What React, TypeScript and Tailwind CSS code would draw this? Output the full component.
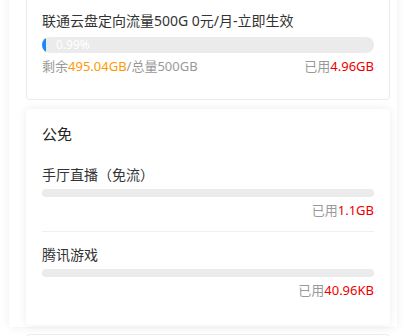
const font = { fontFamily: '"Noto Sans", "Noto Sans CJK SC", sans-serif' };

type Item = { name: string; used: string; pct: number };

const freeItems: Item[] = [
  { name: '手厅直播（免流）', used: '1.1GB', pct: 0 },
  { name: '腾讯游戏', used: '40.96KB', pct: 0 },
];

function Used({ value }: { value: string }) {
  return (
    <div className="mt-[4px] text-right text-[13px] leading-[18px] text-[#999]">
      已用<span className="text-[#e00]">{value}</span>
    </div>
  );
}

export default function App() {
  return (
    <div className="h-[336px] w-full overflow-hidden bg-white" style={font}>
      <div className="ml-[9px] h-full w-[388px] bg-white pr-[7px] pl-[17px] shadow-[0_0_9px_rgba(0,0,0,0.07)]">
        <div className="-mt-[9px] flex flex-col gap-[9px]">
          {/* 定向流量包 */}
          <div className="rounded-[4px] border border-[#ebebf2] bg-white px-[15px] pt-[19px] pb-[24px]">
            <div className="text-[14px] leading-[20px] text-[#333]">联通云盘定向流量500G 0元/月-立即生效</div>
            <div className="relative mt-[6px] h-4 overflow-hidden rounded-full bg-[#ebebeb]">
              <div className="h-full rounded-full bg-[#1989fa]" style={{ width: '0.99%', minWidth: 4 }} />
              <span className="absolute top-0 left-[14px] text-[12px] leading-4 text-white">0.99%</span>
            </div>
            <div className="mt-[4px] flex justify-between text-[13px] leading-[18px] text-[#999]">
              <div>
                剩余<span className="text-[#f90]">495.04GB</span>/总量500GB
              </div>
              <div>
                已用<span className="text-[#e00]">4.96GB</span>
              </div>
            </div>
          </div>

          {/* 公免 */}
          <div className="rounded-[4px] bg-white px-[16px] pt-[14px] pb-[26px] shadow-[0_0_8px_rgba(0,0,0,0.08)]">
            <div className="text-[15px] leading-[22px] text-[#222]">公免</div>
            {freeItems.map((it, i) => (
              <div key={it.name} className={i === 0 ? 'mt-[20px]' : 'mt-[12px] border-t border-[#eeeef5] pt-[13px]'}>
                <div className="text-[14px] leading-[20px] text-[#333]">{it.name}</div>
                <div className="mt-[4px] h-2 overflow-hidden rounded-full bg-[#ebebeb]">
                  <div className="h-full rounded-full bg-[#1989fa]" style={{ width: `${it.pct}%` }} />
                </div>
                <Used value={it.used} />
              </div>
            ))}
          </div>

          <div className="h-[40px] rounded-[4px] border border-[#ebebf2] bg-white" />
        </div>
      </div>
    </div>
  );
}
